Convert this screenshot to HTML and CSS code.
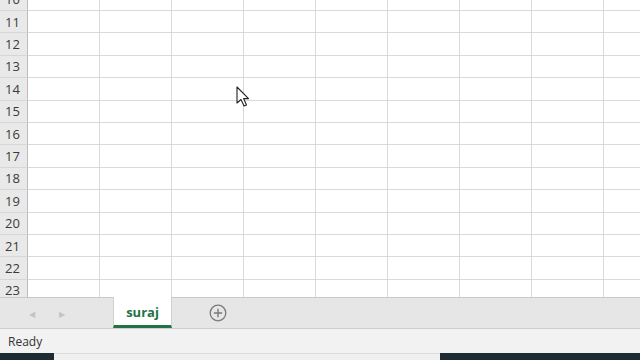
FILE: index.html
```html
<!DOCTYPE html>
<html lang="en">
<head>
<meta charset="UTF-8">
<meta name="viewport" content="width=device-width, initial-scale=1.0">
<title>suraj - Excel</title>
<link rel="stylesheet" href="styles.css">
</head>
<body>

<div class="sheet">
  <div class="grid" id="grid"></div>
  <svg class="cursor" width="14" height="22" viewBox="0 0 14 22">
    <path d="M1 1 L1 17 L5 13.5 L8 20 L10.5 19 L7.6 12.6 L12.5 12.6 Z" fill="#fff" stroke="#222" stroke-width="1.1" stroke-linejoin="round"/>
  </svg>
</div>

<div class="tabbar">
  <div class="nav">
    <span class="arrow">&#9664;</span>
    <span class="arrow">&#9654;</span>
  </div>
  <div class="tab active">suraj</div>
  <div class="add">
    <svg width="18" height="18" viewBox="0 0 18 18">
      <circle cx="9" cy="9" r="7.8" fill="none" stroke="#7a7a7a" stroke-width="1.3"/>
      <path d="M9 4.8 V13.2 M4.8 9 H13.2" stroke="#7a7a7a" stroke-width="1.4"/>
    </svg>
  </div>
</div>

<div class="status">Ready</div>

<div class="taskbar">
  <div class="dark start"></div>
  <div class="light"></div>
  <div class="dark rest"></div>
</div>

<script>
// filas 10 a 23, cabecera + 9 columnas
const grid = document.getElementById('grid');
for (let r = 10; r <= 23; r++) {
  const row = document.createElement('div');
  row.className = 'row';
  let html = '<div class="head">' + r + '</div>';
  for (let c = 0; c < 9; c++) {
    html += '<div class="cell"></div>';
  }
  row.innerHTML = html;
  grid.appendChild(row);
}
</script>

</body>
</html>
```

FILE: styles.css
```css
body {
  margin: 0;
  padding: 0;
  width: 640px;
  height: 360px;
  overflow: hidden;
  background-color: #fff;
  font-family: "Open Sans", "Noto Sans", Arial, sans-serif;
  display: flex;
  flex-direction: column;
}
.sheet {
  position: relative;
  height: 297px;
  overflow: hidden;
  flex-shrink: 0;
}
.grid {
  margin-top: -11.4px;
}
.row {
  display: grid;
  grid-template-columns: 28px repeat(9, 72px);
  height: 22.4px;
}
.head {
  background-color: #e9e9e9;
  border-right: 1px solid #bcbcbc;
  border-bottom: 1px solid #d6d6d6;
  box-sizing: border-box;
  color: #3a3a3a;
  font-size: 13px;
  display: flex;
  align-items: center;
  justify-content: center;
  padding-right: 2px;
}
.cell {
  border-right: 1px solid #d9d9d9;
  border-bottom: 1px solid #d9d9d9;
  box-sizing: border-box;
}
.cursor {
  position: absolute;
  left: 236px;
  top: 86px;
}
.tabbar {
  height: 31px;
  background-color: #e6e6e6;
  border-top: 1px solid #c8c8c8;
  box-sizing: border-box;
  display: flex;
  align-items: stretch;
  flex-shrink: 0;
}
.nav {
  width: 113px;
  display: flex;
  align-items: center;
  padding-left: 29px;
  gap: 24px;
  box-sizing: border-box;
}
.arrow {
  color: #c4c4c4;
  font-size: 8px;
}
.tab {
  width: 59px;
  margin-top: -1px;
  background-color: #fff;
  border-left: 1px solid #d0d0d0;
  border-right: 1px solid #d0d0d0;
  border-bottom: 3px solid #217346;
  box-sizing: border-box;
  color: #217346;
  font-weight: bold;
  font-size: 13px;
  display: flex;
  align-items: center;
  justify-content: center;
  padding-top: 2px;
}
.add {
  display: flex;
  align-items: center;
  padding-left: 37px;
}
.status {
  height: 25px;
  background-color: #f2f2f2;
  border-top: 1px solid #cfcfcf;
  box-sizing: border-box;
  font-size: 12px;
  color: #333;
  padding-left: 8px;
  display: flex;
  align-items: center;
  flex-shrink: 0;
}
.taskbar {
  height: 7px;
  display: flex;
  flex-shrink: 0;
}
.dark {
  background-color: #1f2b33;
}
.start {
  width: 54px;
}
.light {
  width: 386px;
  background-color: #f0f0f0;
  border-top: 1px solid #dcdcdc;
  box-sizing: border-box;
}
.rest {
  flex: 1;
}
```
